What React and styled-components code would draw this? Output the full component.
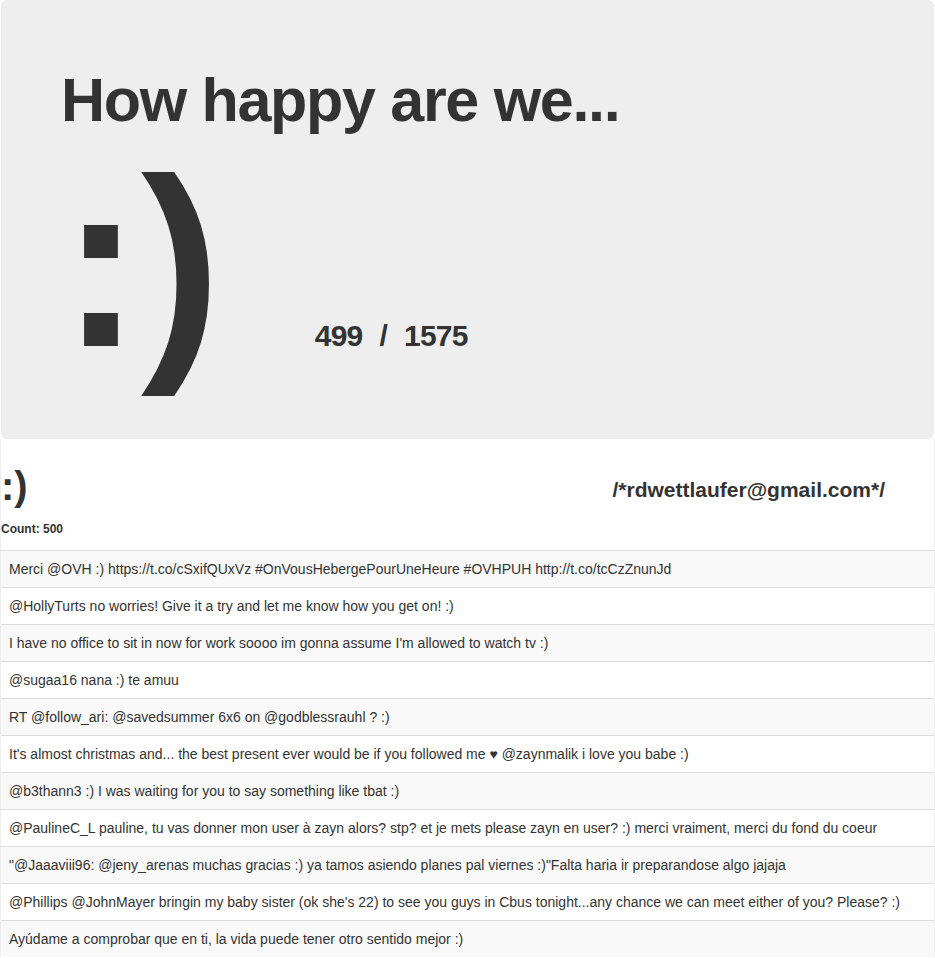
import React from "react";
import styled, { createGlobalStyle } from "styled-components";

const GlobalStyle = createGlobalStyle`
  html, body {
    margin: 0;
    padding: 0;
    background: #fff;
  }
  body {
    font-family: "Liberation Sans", Arial, Helvetica, sans-serif;
    font-size: 14px;
    line-height: 1.42857;
    color: #333;
  }
`;

const tweets = [
  "Merci @OVH :) https://t.co/cSxifQUxVz #OnVousHebergePourUneHeure #OVHPUH http://t.co/tcCzZnunJd",
  "@HollyTurts no worries! Give it a try and let me know how you get on! :)",
  "I have no office to sit in now for work soooo im gonna assume I'm allowed to watch tv :)",
  "@sugaa16 nana :) te amuu",
  "RT @follow_ari: @savedsummer 6x6 on @godblessrauhl ? :)",
  "It's almost christmas and... the best present ever would be if you followed me \u2665 @zaynmalik i love you babe :)",
  "@b3thann3 :) I was waiting for you to say something like tbat :)",
  "@PaulineC_L pauline, tu vas donner mon user \u00e0 zayn alors? stp? et je mets please zayn en user? :) merci vraiment, merci du fond du coeur",
  "\"@Jaaaviii96: @jeny_arenas muchas gracias :) ya tamos asiendo planes pal viernes :)\"Falta haria ir preparandose algo jajaja",
  "@Phillips @JohnMayer bringin my baby sister (ok she's 22) to see you guys in Cbus tonight...any chance we can meet either of you? Please? :)",
  "Ay\u00fadame a comprobar que en ti, la vida puede tener otro sentido mejor :)",
];

const App = () => {
  return (
    <Page>
      <GlobalStyle />
      <Jumbotron>
        <Title>How happy are we...</Title>
        <MoodRow>
          <Smiley>:)</Smiley>
          <Ratio>
            <span>499</span>
            <Slash>/</Slash>
            <span>1575</span>
          </Ratio>
        </MoodRow>
      </Jumbotron>
      <Feed>
        <FeedHeader>
          <FeedMood>:)</FeedMood>
          <Contact>/*rdwettlaufer@gmail.com*/</Contact>
        </FeedHeader>
        <Count>Count: 500</Count>
        <TweetTable>
          <tbody>
            {tweets.map((t, i) => (
              <TweetRow key={i} $striped={i % 2 === 0}>
                <TweetCell>{t}</TweetCell>
              </TweetRow>
            ))}
          </tbody>
        </TweetTable>
      </Feed>
    </Page>
  );
};

const Page = styled.div`
  width: 935px;
`;

const Jumbotron = styled.div`
  margin: 0 1px;
  padding: 66px 60px 56px;
  background: #eee;
  border-radius: 6px;
`;

const Title = styled.h1`
  margin: 0 0 8px;
  font-size: 61px;
  line-height: 69px;
  letter-spacing: -1.3px;
  font-weight: 700;
  color: #333;
`;

const MoodRow = styled.div`
  display: flex;
  align-items: baseline;
`;

const Smiley = styled.span`
  font-size: 240px;
  line-height: 240px;
  font-weight: 700;
  color: #333;
`;

const Ratio = styled.span`
  display: inline-flex;
  align-items: baseline;
  margin-left: 94px;
  font-size: 30px;
  font-weight: 700;
  letter-spacing: -0.8px;
`;

const Slash = styled.span`
  margin: 0 17px 0 17px;
`;

const Feed = styled.div`
  border-left: 1px solid #eee;
  border-right: 1px solid #eee;
  padding-top: 24px;
`;

const FeedHeader = styled.div`
  display: flex;
  justify-content: space-between;
  align-items: flex-start;
`;

const FeedMood = styled.h1`
  margin: 0;
  font-size: 40px;
  line-height: 46px;
  font-weight: 700;
  color: #333;
`;

const Contact = styled.h3`
  margin: 15px 49px 0 0;
  font-size: 21px;
  line-height: 1.1;
  font-weight: 700;
  color: #333;
`;

const Count = styled.div`
  margin: 12px 0 12px;
  font-size: 12px;
  line-height: 17px;
  font-weight: 700;
`;

const TweetTable = styled.table`
  width: 100%;
  border-collapse: collapse;
  border-spacing: 0;
`;

const TweetRow = styled.tr`
  background: ${(p) => (p.$striped ? "#f9f9f9" : "#fff")};
`;

const TweetCell = styled.td`
  padding: 8px;
  line-height: 20px;
  border-top: 1px solid #ddd;
  vertical-align: top;
`;

export default App;
